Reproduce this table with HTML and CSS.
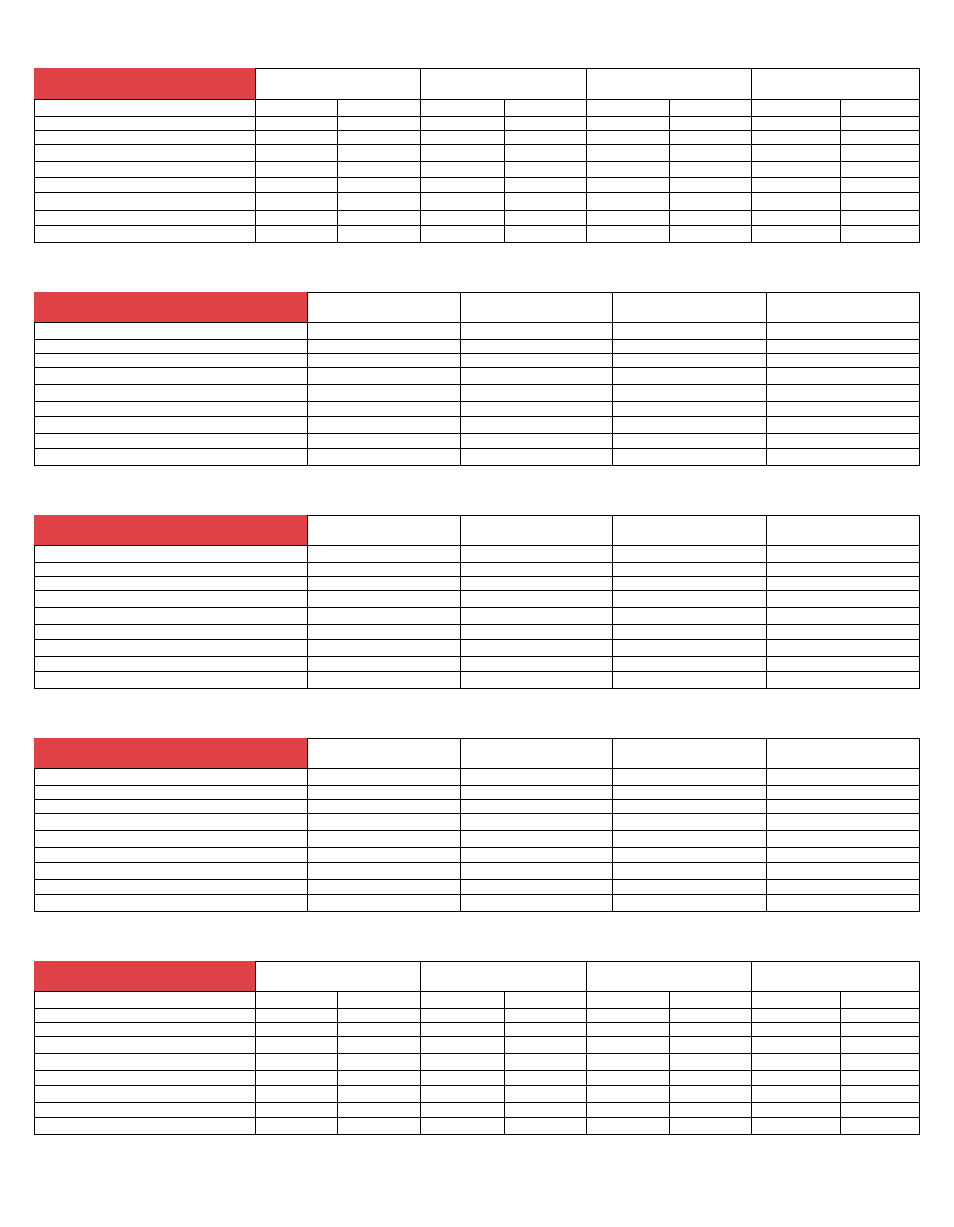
FILE: index.html
```html
<!DOCTYPE html>
<html>
<head>
<meta charset="utf-8">
<title>Tables</title>
<link rel="stylesheet" href="styles.css">
</head>
<body>
<div class="page">
  <div class="grid grid8 wide">
    <div class="c title"></div><div class="c h span2"></div><div class="c h span2"></div><div class="c h span2"></div><div class="c h span2"></div>
    <div class="c"></div><div class="c"></div><div class="c"></div><div class="c"></div><div class="c"></div><div class="c"></div><div class="c"></div><div class="c"></div><div class="c"></div>
    <div class="c"></div><div class="c"></div><div class="c"></div><div class="c"></div><div class="c"></div><div class="c"></div><div class="c"></div><div class="c"></div><div class="c"></div>
    <div class="c"></div><div class="c"></div><div class="c"></div><div class="c"></div><div class="c"></div><div class="c"></div><div class="c"></div><div class="c"></div><div class="c"></div>
    <div class="c"></div><div class="c"></div><div class="c"></div><div class="c"></div><div class="c"></div><div class="c"></div><div class="c"></div><div class="c"></div><div class="c"></div>
    <div class="c"></div><div class="c"></div><div class="c"></div><div class="c"></div><div class="c"></div><div class="c"></div><div class="c"></div><div class="c"></div><div class="c"></div>
    <div class="c"></div><div class="c"></div><div class="c"></div><div class="c"></div><div class="c"></div><div class="c"></div><div class="c"></div><div class="c"></div><div class="c"></div>
    <div class="c"></div><div class="c"></div><div class="c"></div><div class="c"></div><div class="c"></div><div class="c"></div><div class="c"></div><div class="c"></div><div class="c"></div>
    <div class="c"></div><div class="c"></div><div class="c"></div><div class="c"></div><div class="c"></div><div class="c"></div><div class="c"></div><div class="c"></div><div class="c"></div>
    <div class="c"></div><div class="c"></div><div class="c"></div><div class="c"></div><div class="c"></div><div class="c"></div><div class="c"></div><div class="c"></div><div class="c"></div>
  </div>

  <div class="grid grid4">
    <div class="c title"></div><div class="c h"></div><div class="c h"></div><div class="c h"></div><div class="c h"></div>
    <div class="c"></div><div class="c"></div><div class="c"></div><div class="c"></div><div class="c"></div>
    <div class="c"></div><div class="c"></div><div class="c"></div><div class="c"></div><div class="c"></div>
    <div class="c"></div><div class="c"></div><div class="c"></div><div class="c"></div><div class="c"></div>
    <div class="c"></div><div class="c"></div><div class="c"></div><div class="c"></div><div class="c"></div>
    <div class="c"></div><div class="c"></div><div class="c"></div><div class="c"></div><div class="c"></div>
    <div class="c"></div><div class="c"></div><div class="c"></div><div class="c"></div><div class="c"></div>
    <div class="c"></div><div class="c"></div><div class="c"></div><div class="c"></div><div class="c"></div>
    <div class="c"></div><div class="c"></div><div class="c"></div><div class="c"></div><div class="c"></div>
    <div class="c"></div><div class="c"></div><div class="c"></div><div class="c"></div><div class="c"></div>
  </div>

  <div class="grid grid4">
    <div class="c title"></div><div class="c h"></div><div class="c h"></div><div class="c h"></div><div class="c h"></div>
    <div class="c"></div><div class="c"></div><div class="c"></div><div class="c"></div><div class="c"></div>
    <div class="c"></div><div class="c"></div><div class="c"></div><div class="c"></div><div class="c"></div>
    <div class="c"></div><div class="c"></div><div class="c"></div><div class="c"></div><div class="c"></div>
    <div class="c"></div><div class="c"></div><div class="c"></div><div class="c"></div><div class="c"></div>
    <div class="c"></div><div class="c"></div><div class="c"></div><div class="c"></div><div class="c"></div>
    <div class="c"></div><div class="c"></div><div class="c"></div><div class="c"></div><div class="c"></div>
    <div class="c"></div><div class="c"></div><div class="c"></div><div class="c"></div><div class="c"></div>
    <div class="c"></div><div class="c"></div><div class="c"></div><div class="c"></div><div class="c"></div>
    <div class="c"></div><div class="c"></div><div class="c"></div><div class="c"></div><div class="c"></div>
  </div>

  <div class="grid grid4">
    <div class="c title"></div><div class="c h"></div><div class="c h"></div><div class="c h"></div><div class="c h"></div>
    <div class="c"></div><div class="c"></div><div class="c"></div><div class="c"></div><div class="c"></div>
    <div class="c"></div><div class="c"></div><div class="c"></div><div class="c"></div><div class="c"></div>
    <div class="c"></div><div class="c"></div><div class="c"></div><div class="c"></div><div class="c"></div>
    <div class="c"></div><div class="c"></div><div class="c"></div><div class="c"></div><div class="c"></div>
    <div class="c"></div><div class="c"></div><div class="c"></div><div class="c"></div><div class="c"></div>
    <div class="c"></div><div class="c"></div><div class="c"></div><div class="c"></div><div class="c"></div>
    <div class="c"></div><div class="c"></div><div class="c"></div><div class="c"></div><div class="c"></div>
    <div class="c"></div><div class="c"></div><div class="c"></div><div class="c"></div><div class="c"></div>
    <div class="c"></div><div class="c"></div><div class="c"></div><div class="c"></div><div class="c"></div>
  </div>

  <div class="grid grid8">
    <div class="c title"></div><div class="c h span2"></div><div class="c h span2"></div><div class="c h span2"></div><div class="c h span2"></div>
    <div class="c"></div><div class="c"></div><div class="c"></div><div class="c"></div><div class="c"></div><div class="c"></div><div class="c"></div><div class="c"></div><div class="c"></div>
    <div class="c"></div><div class="c"></div><div class="c"></div><div class="c"></div><div class="c"></div><div class="c"></div><div class="c"></div><div class="c"></div><div class="c"></div>
    <div class="c"></div><div class="c"></div><div class="c"></div><div class="c"></div><div class="c"></div><div class="c"></div><div class="c"></div><div class="c"></div><div class="c"></div>
    <div class="c"></div><div class="c"></div><div class="c"></div><div class="c"></div><div class="c"></div><div class="c"></div><div class="c"></div><div class="c"></div><div class="c"></div>
    <div class="c"></div><div class="c"></div><div class="c"></div><div class="c"></div><div class="c"></div><div class="c"></div><div class="c"></div><div class="c"></div><div class="c"></div>
    <div class="c"></div><div class="c"></div><div class="c"></div><div class="c"></div><div class="c"></div><div class="c"></div><div class="c"></div><div class="c"></div><div class="c"></div>
    <div class="c"></div><div class="c"></div><div class="c"></div><div class="c"></div><div class="c"></div><div class="c"></div><div class="c"></div><div class="c"></div><div class="c"></div>
    <div class="c"></div><div class="c"></div><div class="c"></div><div class="c"></div><div class="c"></div><div class="c"></div><div class="c"></div><div class="c"></div><div class="c"></div>
    <div class="c"></div><div class="c"></div><div class="c"></div><div class="c"></div><div class="c"></div><div class="c"></div><div class="c"></div><div class="c"></div><div class="c"></div>
  </div>
</div>
</body>
</html>
```

FILE: styles.css
```css
html, body {
  margin: 0;
  padding: 0;
  background: #ffffff;
  font-family: "Liberation Sans", Arial, sans-serif;
}

.page {
  display: flex;
  flex-direction: column;
  gap: 49px;
  padding: 68px 0 0 34px;
}

.grid {
  display: grid;
  width: 886px;
  grid-template-rows: 31px 17px 14px 14px 17px 17px 15px 17px 15px 17px;
}

.grid.wide {
  grid-template-rows: 32px 17px 14px 14px 17px 16px 15px 18px 15px 17px;
}

.grid8 {
  grid-template-columns: 222px 82px 83px 84px 82px 83px 82px 89px 79px;
}

.grid4 {
  grid-template-columns: 274px 153px 152px 154px 153px;
}

.c {
  box-sizing: border-box;
  border-right: 1px solid #000000;
  border-bottom: 1px solid #000000;
}

.h {
  border-top: 1px solid #000000;
}

.span2 {
  grid-column: span 2;
}

.title {
  background: #df4146;
}

.grid8 > .c:nth-child(9n+6),
.grid4 > .c:nth-child(5n+6) {
  border-left: 1px solid #000000;
}
```
